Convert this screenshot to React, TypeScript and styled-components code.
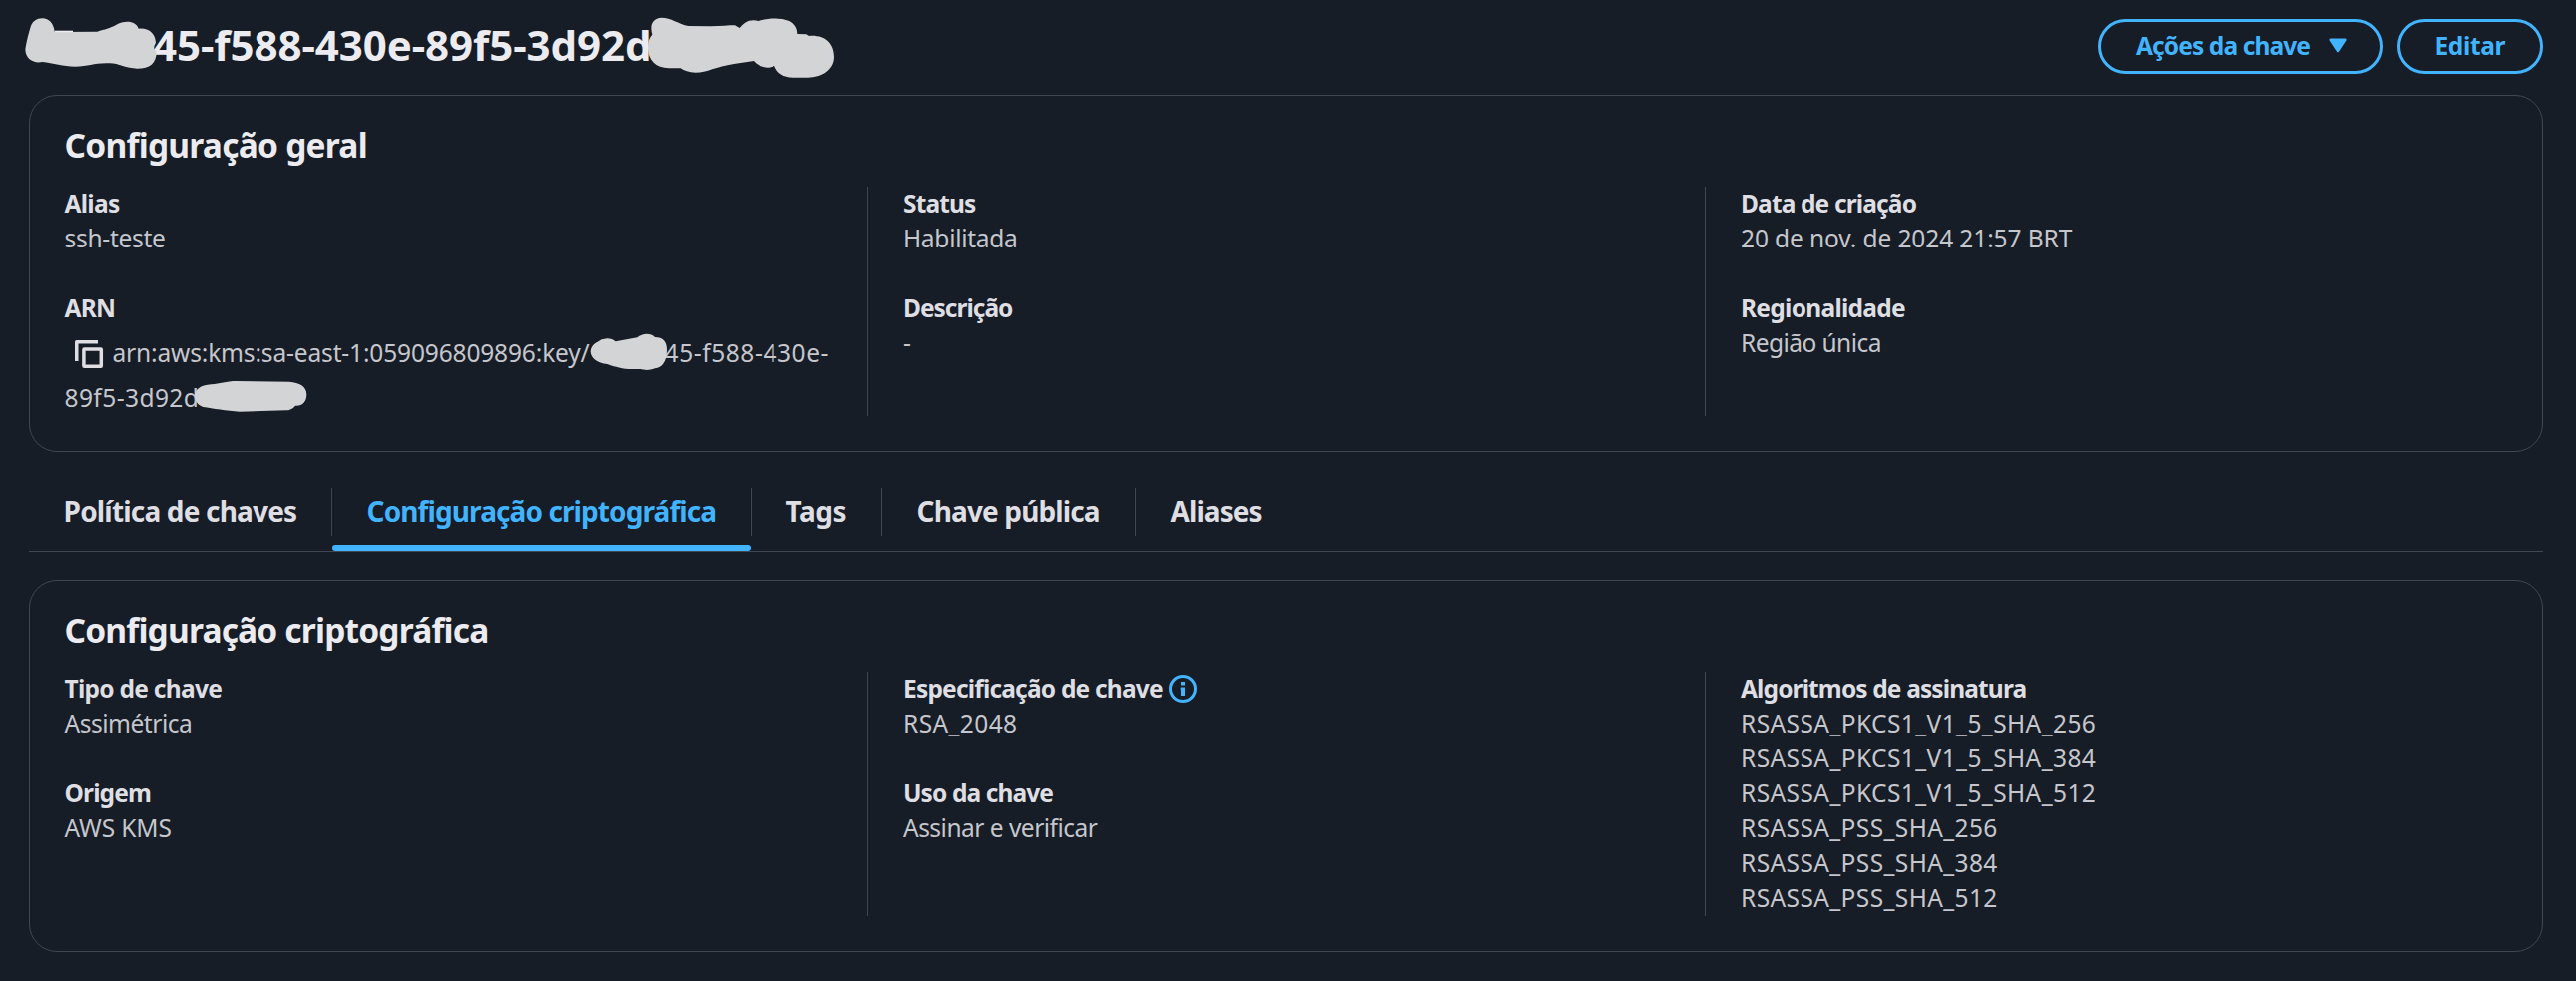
import React from "react";
import styled, { createGlobalStyle } from "styled-components";

const color = {
  page: "#161d26",
  heading: "#ebebf0",
  label: "#dedee3",
  value: "#c6c6cd",
  line: "#424650",
  accent: "#42b4ff",
  mask: "#d3d4d6",
};

const GlobalStyle = createGlobalStyle`
  *, *::before, *::after { box-sizing: border-box; }
  body {
    margin: 0;
    background: ${color.page};
    color: ${color.value};
    font-family: "Noto Sans", "Open Sans", sans-serif;
    font-size: 24.5px;
    line-height: 35px;
  }
`;

const Page = styled.main`
  height: 983px;
  padding: 17px 33px 0 29px;
  background: ${color.page};
  overflow: hidden;
`;

const Header = styled.header`
  display: flex;
  justify-content: space-between;
  align-items: flex-start;
  height: 78px;
`;

const KeyId = styled.h1`
  position: relative;
  margin: 0;
  padding-left: 124px;
  color: ${color.heading};
  font-size: 42px;
  font-weight: 700;
  line-height: 55px;
  letter-spacing: -0.06px;
`;

const Actions = styled.div`
  display: flex;
  gap: 14px;
  padding-top: 2px;
`;

const Button = styled.button<{ $width: number; $inset: number }>`
  display: flex;
  align-items: center;
  gap: 20px;
  width: ${(p) => p.$width}px;
  height: 55px;
  padding: 0 0 2px ${(p) => p.$inset}px;
  border: 3px solid ${color.accent};
  border-radius: 28px;
  background: transparent;
  color: ${color.accent};
  font: inherit;
  font-weight: 700;
`;

const Tracked = styled.span<{ $track: number }>`
  letter-spacing: ${(p) => p.$track}px;
  white-space: nowrap;
`;

const Card = styled.section`
  padding: 27px 34.5px 35px;
  border: 1px solid ${color.line};
  border-radius: 28px;
`;

const CardTitle = styled.h2`
  margin: 0 0 20px;
  color: ${color.heading};
  font-size: 33.5px;
  font-weight: 700;
  line-height: 44px;
`;

const Columns = styled.div<{ $height: number }>`
  display: grid;
  grid-template-columns: 804.5px 839px 1fr;
  grid-template-rows: 100%;
  height: ${(p) => p.$height}px;
`;

const Column = styled.div`
  & + & {
    padding-left: 35px;
    border-left: 1px solid ${color.line};
  }
`;

const Fields = styled.dl`
  display: flex;
  flex-direction: column;
  gap: 35px;
  margin: -1px 0 0;
`;

const Label = styled.dt`
  display: flex;
  align-items: center;
  gap: 6px;
  height: 35px;
  color: ${color.label};
  font-weight: 700;
`;

const Value = styled.dd`
  margin: 0;
`;

const ArnValue = styled(Value)`
  position: relative;
  padding-top: 5px;
  line-height: 45px;
`;

const ArnLine = styled.div`
  height: 45px;
  white-space: nowrap;
`;

const HiddenPart = styled.span`
  display: inline-block;
  width: 75px;
`;

const CopyIcon = styled.svg`
  width: 30px;
  height: 30px;
  margin: 0 8px 0 10px;
  vertical-align: -8px;
`;

const Mask = styled.svg<{ $x: number; $y: number }>`
  position: absolute;
  left: ${(p) => p.$x}px;
  top: ${(p) => p.$y}px;
  fill: ${color.mask};
`;

const Tabs = styled.nav`
  display: flex;
  height: 64px;
  margin: 36px 0 28px;
  border-bottom: 1px solid ${color.line};
`;

const Tab = styled.div<{ $width: number; $active?: boolean }>`
  display: flex;
  flex-direction: column;
  justify-content: space-between;
  width: ${(p) => p.$width}px;
  color: ${(p) => (p.$active ? color.accent : color.label)};
  font-size: 28px;
  font-weight: 700;
`;

const TabLabel = styled.div`
  height: 48px;
  padding-left: 34.6px;
  line-height: 47px;
  ${Tab}:not(:last-child) & {
    border-right: 1px solid ${color.line};
  }
`;

const TabBar = styled.div`
  height: 6px;
  margin-right: 1px;
  border-radius: 4px;
  background: ${color.accent};
`;

type Text = [text: string, track: number];
type Field = { label: Text; values: Text[]; info?: boolean };

const T = ({ of: [text, track] }: { of: Text }) => <Tracked $track={track}>{text}</Tracked>;

const InfoIcon = () => (
  <svg width="28" height="28" viewBox="0 0 28 28" fill={color.accent}>
    <circle cx="14" cy="14" r="12.5" fill="none" stroke={color.accent} strokeWidth="3" />
    <rect x="12" y="7" width="4" height="3.5" />
    <path d="M11.7 12.5h4.3V21h-4v-6h-0.3z" />
  </svg>
);

const FieldItem = ({ label, values, info }: Field) => (
  <div>
    <Label>
      <T of={label} />
      {info && <InfoIcon />}
    </Label>
    {values.map((v) => (
      <Value key={v[0]}>
        <T of={v} />
      </Value>
    ))}
  </div>
);

const ArnField = () => (
  <div>
    <Label>
      <T of={["ARN", -0.81]} />
    </Label>
    <ArnValue>
      <ArnLine>
        <CopyIcon viewBox="0 0 30 30" fill="none" stroke={color.label} strokeWidth="3.5">
          <path d="M1.75 21V1.75H23" strokeLinejoin="round" />
          <rect x="8.9" y="8.9" width="17.4" height="17.4" rx="0.5" strokeLinejoin="round" />
        </CopyIcon>
        <T of={["arn:aws:kms:sa-east-1:059096809896:key/", -0.15]} />
        <HiddenPart />
        <T of={["45-f588-430e-", 0.57]} />
      </ArnLine>
      <ArnLine>
        <T of={["89f5-3d92d", 0.42]} />
      </ArnLine>
      <Mask $x={515.5} $y={-2} width="260" height="60" viewBox="0 0 780 180">
        <path d="M85 46C95 46 103 50 110 55L175 43C190 30 215 28 228 42C252 42 264 55 264 80C264 115 250 133 228 136C210 143 195 141 185 138L150 138C120 136 100 128 85 123C55 120 35 105 35 84C37 62 60 55 68 49Z" />
      </Mask>
      <Mask $x={-4.5} $y={-2} width="300" height="100" viewBox="0 0 900 300">
        <path d="M455 184C480 182 500 174 530 174L690 176C720 178 742 190 742 214C742 238 728 250 708 248C700 258 690 262 680 262L540 266C500 264 460 256 430 252C412 245 405 232 405 218C407 200 420 186 455 184Z" />
      </Mask>
    </ArnValue>
  </div>
);

const tabs: { text: Text; width: number; active?: boolean }[] = [
  { text: ["Política de chaves", -0.82], width: 304 },
  { text: ["Configuração criptográfica", -0.9], width: 420, active: true },
  { text: ["Tags", -0.46], width: 131 },
  { text: ["Chave pública", -0.87], width: 254 },
  { text: ["Aliases", -0.94], width: 160 },
];

const cryptoColumns: Field[][] = [
  [
    { label: ["Tipo de chave", -0.72], values: [["Assimétrica", -0.47]] },
    { label: ["Origem", -0.85], values: [["AWS KMS", -0.12]] },
  ],
  [
    { label: ["Especificação de chave", -0.81], values: [["RSA_2048", 0.4]], info: true },
    { label: ["Uso da chave", -0.9], values: [["Assinar e verificar", -0.51]] },
  ],
  [
    {
      label: ["Algoritmos de assinatura", -0.87],
      values: [
        ["RSASSA_PKCS1_V1_5_SHA_256", 0.42],
        ["RSASSA_PKCS1_V1_5_SHA_384", 0.42],
        ["RSASSA_PKCS1_V1_5_SHA_512", 0.42],
        ["RSASSA_PSS_SHA_256", 0.4],
        ["RSASSA_PSS_SHA_384", 0.4],
        ["RSASSA_PSS_SHA_512", 0.4],
      ],
    },
  ],
];

export default function App() {
  return (
    <Page>
      <GlobalStyle />
      <Header>
        <KeyId>
          45-f588-430e-89f5-3d92d
          <Mask $x={-19} $y={-7} width="200" height="70" viewBox="0 0 600 210">
            <path d="M97 25C118 25 132 42 134 66L262 65C285 58 300 55 318 45C345 30 378 32 386 56C415 53 436 68 438 98C430 112 432 118 440 125C440 160 420 176 382 176C350 176 325 160 300 160C250 158 240 170 195 170C160 170 130 160 97 156C75 162 46 150 46 118C50 92 55 75 62 50C68 34 80 25 97 25Z" />
            <path d="M134 62h55v5h-55z" fill={color.heading} />
          </Mask>
          <Mask $x={601} $y={-7} width="230" height="80" viewBox="0 0 690 240">
            <path d="M98 23C125 23 150 42 178 48L245 49C275 48 300 46 318 46L332 54C345 38 362 26 389 33C410 26 430 25 450 26C485 27 508 42 508 72L535 73L543 78C590 74 618 100 618 142C618 180 580 203 540 203L495 203C465 203 447 190 438 168C415 178 395 174 375 153L315 162C260 170 235 188 200 188C180 188 165 182 155 175L120 175C80 175 57 150 57 112C57 95 62 82 70 74C62 45 70 25 98 23Z" />
          </Mask>
        </KeyId>
        <Actions>
          <Button $width={286} $inset={35}>
            <T of={["Ações da chave", -0.9]} />
            <svg width="18" height="15" viewBox="0 0 18 15" fill={color.accent}>
              <path d="M1.5 0.5h15q1.6 0.6 0.9 2L10 13.8q-1 1-2 0L0.6 2.5q-0.7-1.4 0.9-2z" />
            </svg>
          </Button>
          <Button $width={146} $inset={34.5}>
            <T of={["Editar", -0.37]} />
          </Button>
        </Actions>
      </Header>

      <Card>
        <CardTitle>
          <T of={["Configuração geral", -0.76]} />
        </CardTitle>
        <Columns $height={230}>
          <Column>
            <Fields>
              <FieldItem label={["Alias", -0.7]} values={[["ssh-teste", -0.28]]} />
              <ArnField />
            </Fields>
          </Column>
          <Column>
            <Fields>
              <FieldItem label={["Status", -0.87]} values={[["Habilitada", -0.28]]} />
              <FieldItem label={["Descrição", -1]} values={[["-", 0]]} />
            </Fields>
          </Column>
          <Column>
            <Fields>
              <FieldItem
                label={["Data de criação", -0.86]}
                values={[["20 de nov. de 2024 21:57 BRT", -0.1]]}
              />
              <FieldItem label={["Regionalidade", -0.72]} values={[["Região única", -0.55]]} />
            </Fields>
          </Column>
        </Columns>
      </Card>

      <Tabs>
        {tabs.map((tab) => (
          <Tab key={tab.text[0]} $width={tab.width} $active={tab.active}>
            <TabLabel>
              <T of={tab.text} />
            </TabLabel>
            {tab.active && <TabBar />}
          </Tab>
        ))}
      </Tabs>

      <Card>
        <CardTitle>
          <T of={["Configuração criptográfica", -0.82]} />
        </CardTitle>
        <Columns $height={245}>
          {cryptoColumns.map((fields, i) => (
            <Column key={i}>
              <Fields>
                {fields.map((f) => (
                  <FieldItem key={f.label[0]} {...f} />
                ))}
              </Fields>
            </Column>
          ))}
        </Columns>
      </Card>
    </Page>
  );
}
